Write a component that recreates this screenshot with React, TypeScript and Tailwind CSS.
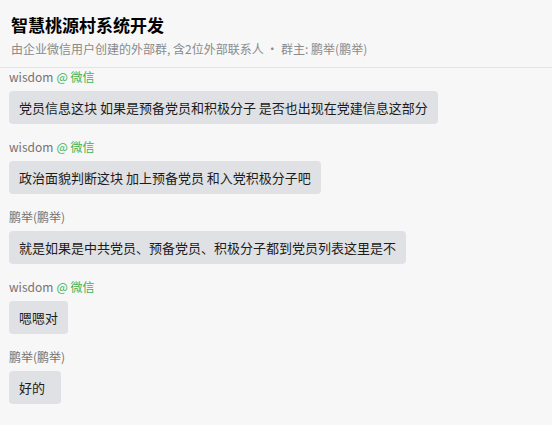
const messages = [
  { sender: "wisdom", wechat: true, text: "党员信息这块 如果是预备党员和积极分子 是否也出现在党建信息这部分" },
  { sender: "wisdom", wechat: true, text: "政治面貌判断这块 加上预备党员 和入党积极分子吧" },
  { sender: "鹏举(鹏举)", wechat: false, text: "就是如果是中共党员、预备党员、积极分子都到党员列表这里是不" },
  { sender: "wisdom", wechat: true, text: "嗯嗯对" },
  { sender: "鹏举(鹏举)", wechat: false, text: "好的" },
];

export default function App() {
  return (
    <div
      className="h-[425px] w-[552px] overflow-hidden bg-[#f7f7f7] text-[#1a1a1a]"
      style={{ fontFamily: '"Noto Sans CJK SC", "Noto Sans", sans-serif' }}
    >
      {/* Header */}
      <div className="border-b border-[#e4e4e4] px-[11px] pt-[13px] pb-[9px]">
        <h1 className="text-[17px] font-bold leading-[24px] text-black">智慧桃源村系统开发</h1>
        <p className="mt-[3px] text-[12px] leading-[18px] text-[#8a8a8a]">
          由企业微信用户创建的外部群, 含2位外部联系人 · 群主: 鹏举(鹏举)
        </p>
      </div>

      {/* Messages */}
      <div className="flex flex-col px-[9px] pt-[1px]">
        {messages.map((m, i) => (
          <div key={i} className="flex flex-col items-start pb-[15px]">
            <div className="flex items-center text-[12px] leading-[16px] text-[#737373]">
              <span>{m.sender}</span>
              {m.wechat && <span className="ml-[3px] text-[#3db351]">@ 微信</span>}
            </div>
            <div className="mt-[6px] min-w-[52px] rounded-[4px] bg-[#e0e1e4] px-[10px] py-[6px] text-[13px] leading-[21px] text-[#1c1c1c]">
              {m.text}
            </div>
          </div>
        ))}
      </div>
    </div>
  );
}
